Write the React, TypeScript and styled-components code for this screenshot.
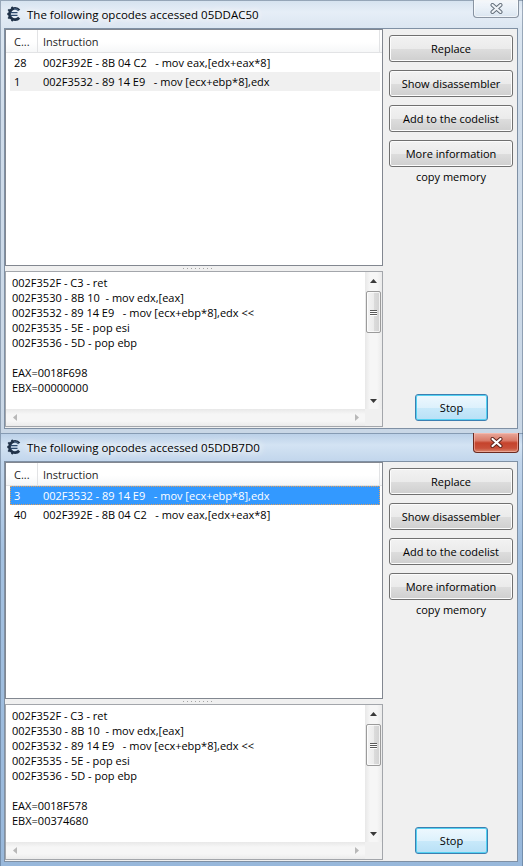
import React from 'react';
import styled, { createGlobalStyle } from 'styled-components';

const FONT = `"Open Sans", "Noto Sans", "DejaVu Sans", sans-serif`;

const Global = createGlobalStyle`
  html, body { margin: 0; padding: 0; background: #a9c2dc; }
  body { font-family: ${FONT}; }
  #root { width: 523px; }
`;

type Sel = 'none' | 'active' | 'inactive';
type Row = { count: string; text: string };
type WinData = {
  title: string;
  active: boolean;
  rows: Row[];
  selected: number;
  memo: string[];
};

const Frame = styled.div<{ $active: boolean }>`
  width: 523px;
  height: 433px;
  box-sizing: border-box;
  padding: 0 5px 4px 4px;
  display: flex;
  flex-direction: column;
  background: ${(p) =>
    p.$active
      ? 'linear-gradient(180deg, #b9cfe7 0px, #d3e3f3 12px, #c2d6ec 28px, #a4c1e0 120px, #98b8db 100%)'
      : 'linear-gradient(180deg, #d5e2ef 0px, #e6eef7 12px, #dbe6f1 28px, #cfdcea 120px, #c9d7e6 100%)'};
  box-shadow: inset 1px 1px 0 rgba(70, 90, 115, 0.45), inset -1px 0 0 rgba(70, 90, 115, 0.45);
`;

const TitleBar = styled.div`
  height: 28px;
  flex: none;
  display: flex;
  align-items: center;
  padding-left: 2px;
`;

const TitleText = styled.span`
  margin-left: 5px;
  font-family: ${FONT};
  font-size: 11.5px;
  color: #000;
  white-space: nowrap;
  text-shadow: 0 0 6px #fff, 0 0 10px #fff, 0 0 14px #fff;
`;

const CloseBtn = styled.div<{ $active: boolean }>`
  align-self: flex-start;
  margin-left: auto;
  margin-right: -1px;
  width: 46px;
  height: ${(p) => (p.$active ? 20 : 18)}px;
  box-sizing: border-box;
  border: 1px solid ${(p) => (p.$active ? '#6b2a20' : 'rgba(95, 108, 125, 0.7)')};
  border-top: none;
  border-radius: 0 0 4px 4px;
  display: flex;
  align-items: center;
  justify-content: center;
  background: ${(p) =>
    p.$active
      ? 'linear-gradient(180deg, #e9a99c 0%, #d97a68 40%, #c5432c 52%, #c9503a 80%, #d98a70 100%)'
      : 'linear-gradient(180deg, rgba(255,255,255,0.75) 0%, rgba(236,242,248,0.7) 50%, rgba(214,226,238,0.7) 100%)'};
  box-shadow: inset 0 0 0 1px ${(p) => (p.$active ? 'rgba(255,200,190,0.5)' : 'rgba(255,255,255,0.6)')};
`;

const Client = styled.div`
  flex: 1;
  box-sizing: border-box;
  border: 1px solid #7f90a4;
  background: #f0f0f0;
  display: grid;
  grid-template-columns: 378px 1fr;
  min-height: 0;
`;

const LeftCol = styled.div`
  display: flex;
  flex-direction: column;
  min-height: 0;
`;

const ListView = styled.div`
  height: 237px;
  flex: none;
  box-sizing: border-box;
  border: 1px solid #828790;
  background: #fff;
  display: flex;
  flex-direction: column;
`;

const Header = styled.div`
  height: 23px;
  flex: none;
  box-sizing: border-box;
  display: flex;
  border-bottom: 1px solid #e2e3e5;
  background: linear-gradient(180deg, #ffffff 0%, #ffffff 55%, #f6f7f8 100%);
`;

const HeaderCell = styled.div<{ $w?: number }>`
  ${(p) => (p.$w ? `width: ${p.$w}px; flex: none;` : 'flex: 1;')}
  box-sizing: border-box;
  border-right: 1px solid #e2e3e5;
  padding-left: ${(p) => (p.$w ? 8 : 5)}px;
  display: flex;
  align-items: center;
  font-family: ${FONT};
  font-size: 11px;
  color: #1e1e1e;
  white-space: nowrap;
`;

const HeaderFill = styled.div`
  width: 2px;
  flex: none;
`;

const ListRow = styled.div<{ $sel: Sel }>`
  height: 19px;
  margin: 0 2px 0 4px;
  box-sizing: border-box;
  display: flex;
  align-items: center;
  font-family: ${FONT};
  font-size: 11px;
  white-space: pre;
  color: ${(p) => (p.$sel === 'active' ? '#fff' : '#000')};
  background: ${(p) =>
    p.$sel === 'active' ? '#3399ff' : p.$sel === 'inactive' ? '#f0f0f0' : 'transparent'};
  outline: ${(p) => (p.$sel === 'active' ? '1px dotted #e0a060' : 'none')};
  outline-offset: -1px;
`;

const CountCell = styled.div`
  width: 27px;
  flex: none;
  padding-left: 4px;
  box-sizing: border-box;
`;

const InstrCell = styled.div`
  flex: 1;
  padding-left: 6px;
`;

const Splitter = styled.div`
  height: 5px;
  flex: none;
  display: flex;
  align-items: center;
  justify-content: center;
`;

const SplitDots = styled.div`
  width: 29px;
  height: 1px;
  margin-left: 6px;
  background: repeating-linear-gradient(90deg, #a4a4a4 0 1px, transparent 1px 4px);
`;

const Memo = styled.div`
  flex: 1;
  margin-bottom: 1px;
  box-sizing: border-box;
  border: 1px solid #a3a6ab;
  background: #fff;
  display: grid;
  grid-template-columns: 1fr 17px;
  grid-template-rows: 1fr 17px;
  min-height: 0;
`;

const MemoText = styled.div`
  padding: 3px 0 0 6px;
  overflow: hidden;
  font-family: ${FONT};
  font-size: 11px;
  line-height: 15px;
  color: #000;
  white-space: pre;
`;

const MemoLine = styled.div`
  height: 15px;
`;

const VScroll = styled.div`
  display: flex;
  flex-direction: column;
  background: linear-gradient(90deg, #e8e8e8 0%, #f6f6f6 30%, #f6f6f6 70%, #ebebeb 100%);
`;

const HScroll = styled.div`
  display: flex;
  background: linear-gradient(180deg, #e8e8e8 0%, #f6f6f6 30%, #f6f6f6 70%, #ebebeb 100%);
`;

const ArrowBox = styled.div`
  width: 17px;
  height: 17px;
  flex: none;
  display: flex;
  align-items: center;
  justify-content: center;
`;

const Track = styled.div`
  flex: 1;
`;

const Thumb = styled.div`
  margin: 2px 1px 0;
  height: 42px;
  box-sizing: border-box;
  border: 1px solid #9b9b9b;
  border-radius: 2px;
  background: linear-gradient(90deg, #f4f4f4 0%, #ececec 50%, #dcdcdc 52%, #d2d2d2 100%);
  box-shadow: inset 0 0 0 1px rgba(255, 255, 255, 0.7);
  display: flex;
  flex-direction: column;
  align-items: center;
  justify-content: center;
  gap: 1px;
`;

const Grip = styled.div`
  width: 7px;
  height: 1px;
  background: #5a5a5a;
  box-shadow: 0 1px 0 #fff;
`;

const Corner = styled.div`
  background: #f0f0f0;
`;

const Panel = styled.div`
  display: flex;
  flex-direction: column;
  padding: 6px 4px 7px 6px;
  min-height: 0;
`;

const ButtonStack = styled.div`
  display: flex;
  flex-direction: column;
  gap: 8px;
`;

const Button = styled.div<{ $default?: boolean }>`
  height: 27px;
  box-sizing: border-box;
  border: 1px solid ${(p) => (p.$default ? '#3c7fb1' : '#707070')};
  border-radius: 3px;
  display: flex;
  align-items: center;
  justify-content: center;
  font-family: ${FONT};
  font-size: 11px;
  color: #000;
  white-space: nowrap;
  background: ${(p) =>
    p.$default
      ? 'linear-gradient(180deg, #eef8fe 0%, #ddf1fc 50%, #c8e9fa 52%, #b8e0f6 100%)'
      : 'linear-gradient(180deg, #f2f2f2 0%, #ebebeb 50%, #dddddd 52%, #cfcfcf 100%)'};
  box-shadow: inset 0 0 0 1px ${(p) => (p.$default ? '#54d2f2' : '#fcfcfc')};
`;

const StopButton = styled(Button)`
  margin-top: auto;
  align-self: center;
  width: 73px;
  margin-left: 1px;
`;

const CopyLabel = styled.div`
  margin-top: 2px;
  text-align: center;
  font-family: ${FONT};
  font-size: 11px;
  line-height: 15px;
  color: #000;
`;

const CEIcon = () => (
  <svg width="16" height="16" viewBox="0 0 16 16">
    <g fill="#1f3148">
      <rect x="1.3" y="6.9" width="2" height="2.2" />
      <rect x="2" y="3.2" width="2" height="2" transform="rotate(-40 3 4.2)" />
      <rect x="2" y="10.8" width="2" height="2" transform="rotate(40 3 11.8)" />
      <rect x="5.2" y="0.8" width="2" height="2" transform="rotate(-15 6.2 1.8)" />
      <rect x="5.2" y="13.2" width="2" height="2" transform="rotate(15 6.2 14.2)" />
    </g>
    <path d="M13.2 4.3 A5.6 5.6 0 1 0 13.2 11.7" fill="none" stroke="#1f3148" strokeWidth="2.8" />
    <path d="M4.5 6.6 H11.5 M4.5 9.4 H11.5" stroke="#2c4a6e" strokeWidth="1.4" />
    <path d="M12.6 4.6 A5 5 0 0 0 8 3" fill="none" stroke="#6f8fb5" strokeWidth="0.8" />
  </svg>
);

const CloseGlyph = ({ active }: { active: boolean }) => (
  <svg width="13" height="11" viewBox="0 0 13 11">
    <path
      d="M2.5 2 L10.5 9 M10.5 2 L2.5 9"
      stroke={active ? '#5a2018' : '#5f6a76'}
      strokeWidth="4"
      strokeLinecap="round"
    />
    <path
      d="M2.5 2 L10.5 9 M10.5 2 L2.5 9"
      stroke={active ? '#ffffff' : '#eef2f6'}
      strokeWidth="2.2"
      strokeLinecap="round"
    />
  </svg>
);

const Arrow = ({ dir, enabled }: { dir: 'up' | 'down' | 'left' | 'right'; enabled: boolean }) => {
  const color = enabled ? '#3a3a3a' : '#b8b8b8';
  const pts: Record<string, string> = {
    up: '0,4 7,4 3.5,0',
    down: '0,0 7,0 3.5,4',
    left: '4,0 4,7 0,3.5',
    right: '0,0 0,7 4,3.5',
  };
  const vertical = dir === 'up' || dir === 'down';
  return (
    <svg width={vertical ? 7 : 4} height={vertical ? 4 : 7} viewBox={vertical ? '0 0 7 4' : '0 0 4 7'}>
      <polygon points={pts[dir]} fill={color} />
    </svg>
  );
};

const Window = ({ data }: { data: WinData }) => (
  <Frame $active={data.active}>
    <TitleBar>
      <CEIcon />
      <TitleText>{data.title}</TitleText>
      <CloseBtn $active={data.active}>
        <CloseGlyph active={data.active} />
      </CloseBtn>
    </TitleBar>
    <Client>
      <LeftCol>
        <ListView>
          <Header>
            <HeaderCell $w={32}>C...</HeaderCell>
            <HeaderCell>Instruction</HeaderCell>
            <HeaderFill />
          </Header>
          {data.rows.map((r, i) => (
            <ListRow
              key={i}
              $sel={i === data.selected ? (data.active ? 'active' : 'inactive') : 'none'}
            >
              <CountCell>{r.count}</CountCell>
              <InstrCell>{r.text}</InstrCell>
            </ListRow>
          ))}
        </ListView>
        <Splitter>
          <SplitDots />
        </Splitter>
        <Memo>
          <MemoText>
            {data.memo.map((l, i) => (
              <MemoLine key={i}>{l}</MemoLine>
            ))}
          </MemoText>
          <VScroll>
            <ArrowBox>
              <Arrow dir="up" enabled />
            </ArrowBox>
            <Track>
              <Thumb>
                <Grip />
                <Grip />
                <Grip />
              </Thumb>
            </Track>
            <ArrowBox>
              <Arrow dir="down" enabled />
            </ArrowBox>
          </VScroll>
          <HScroll>
            <ArrowBox>
              <Arrow dir="left" enabled={false} />
            </ArrowBox>
            <Track />
            <ArrowBox>
              <Arrow dir="right" enabled={false} />
            </ArrowBox>
          </HScroll>
          <Corner />
        </Memo>
      </LeftCol>
      <Panel>
        <ButtonStack>
          <Button>Replace</Button>
          <Button>Show disassembler</Button>
          <Button>Add to the codelist</Button>
          <Button>More information</Button>
        </ButtonStack>
        <CopyLabel>copy memory</CopyLabel>
        <StopButton $default>Stop</StopButton>
      </Panel>
    </Client>
  </Frame>
);

const memoBase = [
  '002F352F - C3 - ret',
  '002F3530 - 8B 10  - mov edx,[eax]',
  '002F3532 - 89 14 E9   - mov [ecx+ebp*8],edx <<',
  '002F3535 - 5E - pop esi',
  '002F3536 - 5D - pop ebp',
  '',
];

const windows: WinData[] = [
  {
    title: 'The following opcodes accessed 05DDAC50',
    active: false,
    rows: [
      { count: '28', text: '002F392E - 8B 04 C2   - mov eax,[edx+eax*8]' },
      { count: '1', text: '002F3532 - 89 14 E9   - mov [ecx+ebp*8],edx' },
    ],
    selected: 1,
    memo: [...memoBase, 'EAX=0018F698', 'EBX=00000000'],
  },
  {
    title: 'The following opcodes accessed 05DDB7D0',
    active: true,
    rows: [
      { count: '3', text: '002F3532 - 89 14 E9   - mov [ecx+ebp*8],edx' },
      { count: '40', text: '002F392E - 8B 04 C2   - mov eax,[edx+eax*8]' },
    ],
    selected: 0,
    memo: [...memoBase, 'EAX=0018F578', 'EBX=00374680'],
  },
];

export default function App() {
  return (
    <>
      <Global />
      {windows.map((w, i) => (
        <Window key={i} data={w} />
      ))}
    </>
  );
}
